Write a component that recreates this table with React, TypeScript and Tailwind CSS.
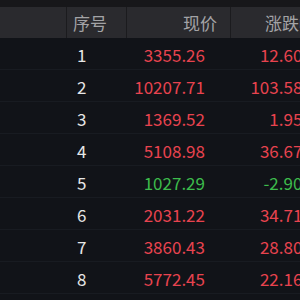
import React from "react";

type Row = { no: number; price: string; change: string; up: boolean };

const rows: Row[] = [
  { no: 1, price: "3355.26", change: "12.60%", up: true },
  { no: 2, price: "10207.71", change: "103.58%", up: true },
  { no: 3, price: "1369.52", change: "1.95%", up: true },
  { no: 4, price: "5108.98", change: "36.67%", up: true },
  { no: 5, price: "1027.29", change: "-2.90%", up: false },
  { no: 6, price: "2031.22", change: "34.71%", up: true },
  { no: 7, price: "3860.43", change: "28.80%", up: true },
  { no: 8, price: "5772.45", change: "22.16%", up: true },
];

const App: React.FC = () => {
  return (
    <div
      className="w-[300px] h-[300px] overflow-hidden bg-[#111318] text-[17px]"
      style={{ fontFamily: '"Noto Sans CJK SC", "Noto Sans", sans-serif' }}
    >
      {/* top strip */}
      <div className="h-[7px] bg-[#17171a]" />

      {/* header */}
      <div className="grid grid-cols-[67px_60px_104px_100px] h-[31px] bg-[#2a2a2e] text-[#a3a3a6] leading-[31px]">
        <div className="border-r border-[#1b1b1e]" />
        <div className="pl-[6px] border-r border-[#1b1b1e]">序号</div>
        <div className="pr-[13px] text-right border-r border-[#1b1b1e]">现价</div>
        <div className="pr-[15px] text-right whitespace-nowrap">涨跌幅</div>
      </div>

      {/* rows */}
      {rows.map((r) => (
        <div
          key={r.no}
          className="grid grid-cols-[67px_60px_104px_100px] h-[32px] leading-[34px] border-b border-[#181b21]"
        >
          <div />
          <div className="pl-[10px] text-[#e6e6e6]">{r.no}</div>
          <div className={`pr-[26px] text-right ${r.up ? "text-[#e8434f]" : "text-[#3dbb4c]"}`}>
            {r.price}
          </div>
          <div
            className={`pr-[13px] text-right whitespace-nowrap ${r.up ? "text-[#e8434f]" : "text-[#3dbb4c]"}`}
          >
            {r.change}
          </div>
        </div>
      ))}
    </div>
  );
};

export default App;
